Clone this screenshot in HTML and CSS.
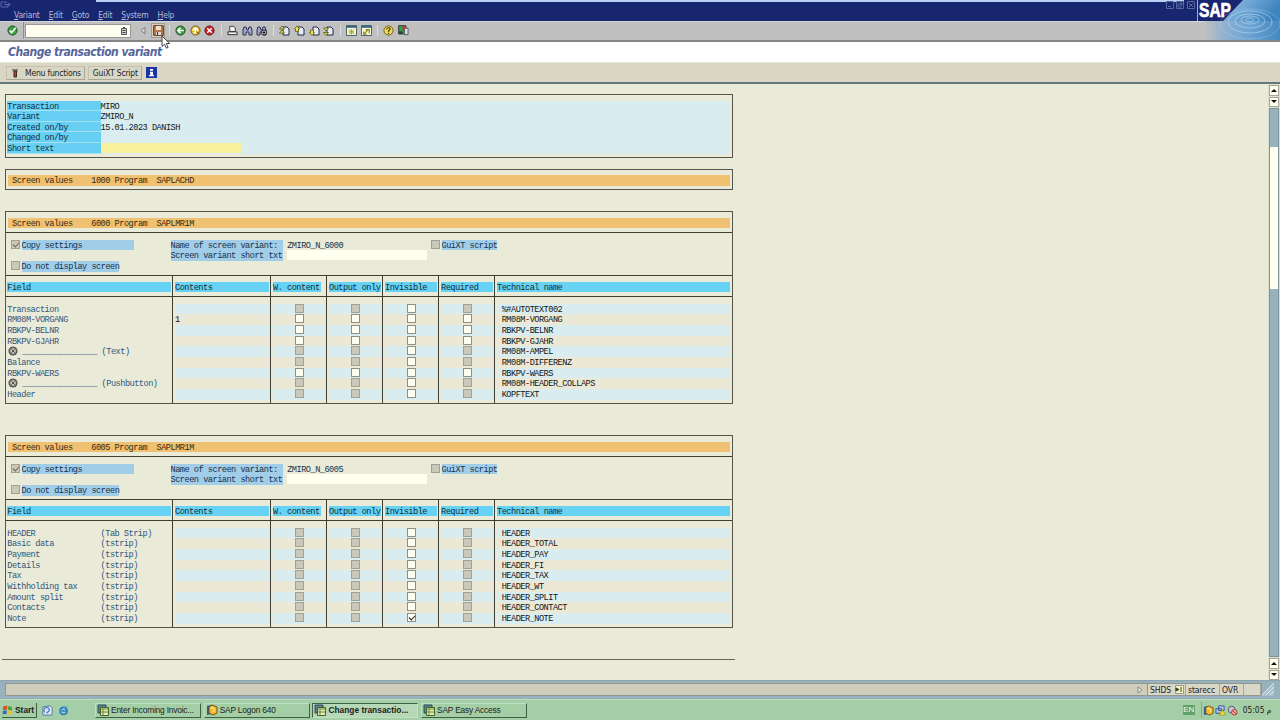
FILE: index.html
```
<!DOCTYPE html>
<html>
<head>
  <meta charset="utf-8">
  <title>Change transaction variant</title>
  <link rel="stylesheet" href="styles.css">
</head>
<body>

<!-- shared icons -->
<svg class="defs" width="0" height="0">
  <symbol id="page" viewBox="0 0 11 11"><path d="M4 2h4l2 2v6H4z" fill="#e8ecf8" stroke="#222a44"/></symbol>
  <symbol id="bino" viewBox="0 0 11 11"><path d="M1 10V5l1-3h2l1 3h1l1-3h2l1 3v5H7V7H4v3z" fill="#a5a8ce" stroke="#2c2e50"/></symbol>
  <symbol id="sapwin" viewBox="0 0 12 12"><path d="M1 1h8v8H1z" fill="#5b7d9a" stroke="#2d4c5c"/><path d="M3.500 3.500h8v8h-8z" fill="#e7e9c0" stroke="#44661f"/><path d="M4 5h7M4 8h7M6 5v6" stroke="#668b2d"/></symbol>
  <symbol id="logon" viewBox="0 0 12 12"><path d="M1 2l4-1v9L1 11z" fill="#345b8c"/><path d="M3 3l3-2 5 2v6l-4 2-4-2z" fill="#f5b92c" stroke="#725118"/><path d="M4 4h4v4" fill="none" stroke="#fff0a0"/></symbol>
  <symbol id="cross" viewBox="0 0 10 10"><circle cx="5" cy="5" r="4.600" fill="#5f5f59"/><circle cx="5" cy="5" r="2.800" fill="#c8c8bb"/><path d="M3.300 3.300l3.400 3.400M6.700 3.300L3.300 6.700" stroke="#4d4d48"/></symbol>
</svg>

<div class="menubar">
  <svg class="sysmenu" viewBox="0 0 11 8"><path d="M1 2h6M1 7h7V5M1 2v5M4 4.500h6M8 2.500l2 2-2 2" fill="none" stroke="#596ba6"/></svg>
  <div class="menus">
    <span><u>V</u>ariant</span><span><u>E</u>dit</span><span><u>G</u>oto</span><span><u>E</u>dit</span><span><u>S</u>ystem</span><span><u>H</u>elp</span>
  </div>
  <svg class="winbtns" viewBox="0 0 30 9"><g fill="none" stroke="#56689f"><path d="M.5.500h7v7h-7zM2 5.500h3M10.500.500h7v7h-7zM12 3h3v3h-3zM14 2h2v2M21.500.500h7v7h-7zM23 2l4 4M27 2l-4 4"/></g></svg>
</div>

<div class="toolbar">
  <div class="okzone"><svg viewBox="0 0 12 12"><circle cx="6" cy="6" r="5" fill="#3ca03c" stroke="#174f1a"/><path d="M3 6l2 2.500L9.500 3" fill="none" stroke="#fff" stroke-width="1.600"/></svg></div>
  <div class="command"><svg viewBox="0 0 6 8"><path d="M.5 1.500h5v6h-5z" fill="#d5d5ca" stroke="#555"/><path d="M1.500 3.500h3M1.500 5.500h3M2 .5h2" stroke="#444"/></svg></div>
  <svg class="t-back" viewBox="0 0 6 9"><path d="M5 1v7L1 4.500z" fill="#d4d4d4" stroke="#808080"/></svg>
  <div class="save"><svg viewBox="0 0 11 11"><path d="M.7.700h9.600v9.600H.7z" fill="#b97a4b" stroke="#5a3827"/><path d="M3 1h5v4H3z" fill="#efe1cb"/><path d="M3 7h5v3H3z" fill="#dadada"/><path d="M4 7h1v3H4z" fill="#333"/></svg></div>
  <i class="sep"></i>
  <svg class="ic" viewBox="0 0 12 12"><circle cx="6" cy="6" r="5" fill="#3d9b42" stroke="#134516"/><path d="M9.500 6H4M6 3L3 6l3 3" fill="none" stroke="#fff" stroke-width="1.700"/></svg>
  <svg class="ic" viewBox="0 0 12 12"><circle cx="6" cy="6" r="5" fill="#e6bf35" stroke="#6c5313"/><path d="M3 6l3-3 3 3M6 4v4.500H4" fill="none" stroke="#fff" stroke-width="1.500"/><path d="M7.500 7.500l2 2.500" stroke="#333"/></svg>
  <svg class="ic" viewBox="0 0 12 12"><circle cx="6" cy="6" r="5" fill="#c92228" stroke="#5d1014"/><path d="M3.500 3.500l5 5M8.500 3.500l-5 5" stroke="#fff" stroke-width="1.500"/></svg>
  <i class="sep"></i>
  <svg class="ic" viewBox="0 0 12 12"><path d="M3 1.500h4l2 1.500v4H3z" fill="#fff" stroke="#333"/><path d="M1 7.500h10v3H1z" fill="#f4f4f4" stroke="#222"/></svg>
  <svg class="ic" viewBox="0 0 11 11"><use href="#bino"/></svg>
  <svg class="ic" viewBox="0 0 11 11"><use href="#bino"/><circle cx="8" cy="7.500" r="2.500" fill="#fff" stroke="#111"/><path d="M6.500 7.500h3M8 6v3" stroke="#111"/></svg>
  <i class="sep"></i>
  <svg class="ic" viewBox="0 0 11 11"><use href="#page"/><path d="M.5 4l2.500-3L5.500 4zM.5 8L3 5l2.500 3z" fill="#f1e442" stroke="#4a4a12" stroke-width=".7"/></svg>
  <svg class="ic" viewBox="0 0 11 11"><use href="#page"/><path d="M.5 4l2.500-3 2.500 3h-1v2.500h-3V4z" fill="#f1e442" stroke="#4a4a12" stroke-width=".7"/></svg>
  <svg class="ic" viewBox="0 0 11 11"><use href="#page"/><path d="M.5 7.500l2.500 3 2.500-3h-1V5h-3v2.500z" fill="#f1e442" stroke="#4a4a12" stroke-width=".7"/></svg>
  <svg class="ic" viewBox="0 0 11 11"><use href="#page"/><path d="M.5 3l2.500 3 2.500-3zM.5 7.500l2.500 3 2.500-3z" fill="#f1e442" stroke="#4a4a12" stroke-width=".7"/></svg>
  <i class="sep"></i>
  <svg class="ic" viewBox="0 0 12 12"><path d="M.5.500h11v11H.5z" fill="#f7f7d6" stroke="#3a5b62"/><path d="M1 1h10v2H1z" fill="#2d6281"/><path d="M3 5l6 5M9 5l-6 5M6 4.500v6M3 7.500h6" stroke="#a9a52c"/></svg>
  <svg class="ic" viewBox="0 0 12 12"><path d="M.5.500h11v11H.5z" fill="#f7f7d6" stroke="#3a5b62"/><path d="M1 1h10v2H1z" fill="#2d6281"/><path d="M3 10l5-5M5 5h4v4M3 7v3h3" fill="none" stroke="#8e8b1a" stroke-width="1.300"/></svg>
  <i class="sep"></i>
  <svg class="ic" viewBox="0 0 12 12"><circle cx="6" cy="6" r="5" fill="#efd955" stroke="#685618"/><path d="M4 5q0-2 2-2t2 1.500L6 6.500v1M6 8.500v1.300" fill="none" stroke="#4e3c0c" stroke-width="1.300"/></svg>
  <svg class="ic" viewBox="0 0 12 12"><path d="M.7.700h8v9h-8z" fill="#2da04b" stroke="#333"/><path d="M5 1h3v5H5z" fill="#d5342f"/><path d="M7 3.500h4v7H7z" fill="#dcdcf0" stroke="#555"/><path d="M1 7h4v3H1z" fill="#304030"/></svg>
</div>

<svg class="brand" viewBox="0 0 83 40">
  <defs>
    <linearGradient id="water" x1="0" x2="1" y1="0" y2=".3"><stop offset="0" stop-color="#8fb4da"/><stop offset=".4" stop-color="#74a9d6"/><stop offset="1" stop-color="#3d83bd"/></linearGradient>
    <linearGradient id="shore" gradientUnits="userSpaceOnUse" x1="8" x2="83" y1="0" y2="0"><stop offset="0" stop-color="#c0c0c0"/><stop offset=".28" stop-color="#8db0d2"/><stop offset=".6" stop-color="#6aa3d2"/><stop offset="1" stop-color="#4588c0"/></linearGradient>
  </defs>
  <path d="M0 0h46L26 21H0z" fill="#18266f"/>
  <path d="M8 21h75v19H8z" fill="url(#shore)"/>
  <path d="M46 0h37v21H26z" fill="url(#water)"/>
  <g fill="none" stroke="#b9dcf4" stroke-opacity=".6">
    <ellipse cx="53" cy="20" rx="4" ry="2"/><ellipse cx="53" cy="20" rx="9" ry="4"/><ellipse cx="53" cy="21" rx="15" ry="7"/><ellipse cx="53" cy="22" rx="22" ry="11"/><ellipse cx="53" cy="24" rx="30" ry="15" stroke-opacity=".3"/>
  </g>
  <path d="M.5 0v21" stroke="#a6acc8"/>
  <text x="2" y="17" textLength="32" lengthAdjust="spacingAndGlyphs">SAP</text>
</svg>

<div class="titlebar"><h1>Change transaction variant</h1></div>

<div class="appbar">
  <div class="btn"><svg viewBox="0 0 8 10"><path d="M1 1l6 2M7 1L1 3" stroke="#777"/><path d="M3 3h2.500v6H3z" fill="#b5403a" stroke="#3f2422"/></svg>Menu functions</div>
  <div class="btn">GuiXT Script</div>
  <svg class="info" viewBox="0 0 11 11"><path d="M0 0h11v11H0z" fill="#1d35a4"/><path d="M4 2h3v1.700H4zM4 4.700h3V8h1v1.200H3V8h1.300V6H4z" fill="#fff"/></svg>
</div>

<div class="work">
  <div class="list">

    <div class="box head">
      <div class="line"><span class="key">Transaction</span><span class="val">MIRO</span></div>
      <div class="line"><span class="key">Variant</span><span class="val">ZMIRO_N</span></div>
      <div class="line"><span class="key">Created on/by</span><span class="val">15.01.2023 DANISH</span></div>
      <div class="line"><span class="key">Changed on/by</span><span class="val"></span></div>
      <div class="line"><span class="key">Short text</span><span class="val"><span class="entry"></span></span></div>
    </div>

    <div class="box s1000">
      <div class="bar"> Screen values    1000 Program  SAPLACHD</div>
    </div>

    <div class="box s6000">
      <div class="bar"> Screen values    6000 Program  SAPLMR1M</div>
      <div class="settings">
        <div class="left">
          <div class="opt wide"><i class="cb off tick"></i><span>Copy settings</span></div>
          <div class="opt"><i class="cb off"></i><span>Do not display screen</span></div>
        </div>
        <div class="mid">
          <div class="pair"><span>Name of screen variant:</span><b>ZMIRO_N_6000</b></div>
          <div class="pair"><span>Screen variant short txt</span><em></em></div>
        </div>
        <div class="opt"><i class="cb off"></i><span>GuiXT script</span></div>
      </div>
      <div class="row th"><div>Field</div><div>Contents</div><div>W. content</div><div>Output only</div><div>Invisible</div><div>Required</div><div>Technical name</div></div>
      <div class="rows">
        <div class="row"><div>Transaction</div><div></div><div><i class="cb off"></i></div><div><i class="cb off"></i></div><div><i class="cb"></i></div><div><i class="cb off"></i></div><div>%#AUTOTEXT002</div></div>
        <div class="row"><div>RM08M-VORGANG</div><div>1</div><div><i class="cb"></i></div><div><i class="cb"></i></div><div><i class="cb"></i></div><div><i class="cb"></i></div><div>RM08M-VORGANG</div></div>
        <div class="row"><div>RBKPV-BELNR</div><div></div><div><i class="cb"></i></div><div><i class="cb"></i></div><div><i class="cb"></i></div><div><i class="cb"></i></div><div>RBKPV-BELNR</div></div>
        <div class="row"><div>RBKPV-GJAHR</div><div></div><div><i class="cb"></i></div><div><i class="cb"></i></div><div><i class="cb"></i></div><div><i class="cb"></i></div><div>RBKPV-GJAHR</div></div>
        <div class="row"><div><svg><use href="#cross"/></svg>________________ (Text)</div><div></div><div><i class="cb off"></i></div><div><i class="cb off"></i></div><div><i class="cb"></i></div><div><i class="cb off"></i></div><div>RM08M-AMPEL</div></div>
        <div class="row"><div>Balance</div><div></div><div><i class="cb off"></i></div><div><i class="cb off"></i></div><div><i class="cb"></i></div><div><i class="cb off"></i></div><div>RM08M-DIFFERENZ</div></div>
        <div class="row"><div>RBKPV-WAERS</div><div></div><div><i class="cb"></i></div><div><i class="cb"></i></div><div><i class="cb"></i></div><div><i class="cb"></i></div><div>RBKPV-WAERS</div></div>
        <div class="row"><div><svg><use href="#cross"/></svg>________________ (Pushbutton)</div><div></div><div><i class="cb off"></i></div><div><i class="cb off"></i></div><div><i class="cb"></i></div><div><i class="cb off"></i></div><div>RM08M-HEADER_COLLAPS</div></div>
        <div class="row"><div>Header</div><div></div><div><i class="cb off"></i></div><div><i class="cb off"></i></div><div><i class="cb"></i></div><div><i class="cb off"></i></div><div>KOPFTEXT</div></div>
      </div>
    </div>

    <div class="box s6005">
      <div class="bar"> Screen values    6005 Program  SAPLMR1M</div>
      <div class="settings">
        <div class="left">
          <div class="opt wide"><i class="cb off tick"></i><span>Copy settings</span></div>
          <div class="opt"><i class="cb off"></i><span>Do not display screen</span></div>
        </div>
        <div class="mid">
          <div class="pair"><span>Name of screen variant:</span><b>ZMIRO_N_6005</b></div>
          <div class="pair"><span>Screen variant short txt</span><em></em></div>
        </div>
        <div class="opt"><i class="cb off"></i><span>GuiXT script</span></div>
      </div>
      <div class="row th"><div>Field</div><div>Contents</div><div>W. content</div><div>Output only</div><div>Invisible</div><div>Required</div><div>Technical name</div></div>
      <div class="rows">
        <div class="row"><div>HEADER              (Tab Strip)</div><div></div><div><i class="cb off"></i></div><div><i class="cb off"></i></div><div><i class="cb"></i></div><div><i class="cb off"></i></div><div>HEADER</div></div>
        <div class="row"><div>Basic data          (tstrip)</div><div></div><div><i class="cb off"></i></div><div><i class="cb off"></i></div><div><i class="cb"></i></div><div><i class="cb off"></i></div><div>HEADER_TOTAL</div></div>
        <div class="row"><div>Payment             (tstrip)</div><div></div><div><i class="cb off"></i></div><div><i class="cb off"></i></div><div><i class="cb"></i></div><div><i class="cb off"></i></div><div>HEADER_PAY</div></div>
        <div class="row"><div>Details             (tstrip)</div><div></div><div><i class="cb off"></i></div><div><i class="cb off"></i></div><div><i class="cb"></i></div><div><i class="cb off"></i></div><div>HEADER_FI</div></div>
        <div class="row"><div>Tax                 (tstrip)</div><div></div><div><i class="cb off"></i></div><div><i class="cb off"></i></div><div><i class="cb"></i></div><div><i class="cb off"></i></div><div>HEADER_TAX</div></div>
        <div class="row"><div>Withholding tax     (tstrip)</div><div></div><div><i class="cb off"></i></div><div><i class="cb off"></i></div><div><i class="cb"></i></div><div><i class="cb off"></i></div><div>HEADER_WT</div></div>
        <div class="row"><div>Amount split        (tstrip)</div><div></div><div><i class="cb off"></i></div><div><i class="cb off"></i></div><div><i class="cb"></i></div><div><i class="cb off"></i></div><div>HEADER_SPLIT</div></div>
        <div class="row"><div>Contacts            (tstrip)</div><div></div><div><i class="cb off"></i></div><div><i class="cb off"></i></div><div><i class="cb"></i></div><div><i class="cb off"></i></div><div>HEADER_CONTACT</div></div>
        <div class="row"><div>Note                (tstrip)</div><div></div><div><i class="cb off"></i></div><div><i class="cb off"></i></div><div><i class="cb tick"></i></div><div><i class="cb off"></i></div><div>HEADER_NOTE</div></div>
      </div>
    </div>

    <div class="rule"></div>
  </div>

  <div class="scroll">
    <div class="arrow up"></div>
    <div class="arrow down"></div>
    <div class="track"><div class="thumb"></div></div>
    <div class="arrow up"></div>
    <div class="arrow down"></div>
  </div>
</div>

<div class="status">
  <div class="message"><svg viewBox="0 0 6 8"><path d="M1 1v6l4-3z" fill="#eee" stroke="#888"/></svg></div>
  <div class="cells">
    <span class="c1">SHDS <svg viewBox="0 0 9 9"><path d="M.5.500h8v8h-8z" fill="#f2f1c8" stroke="#99988a"/><path d="M1 3l3 1.500L1 6zM6 2v5" fill="#333" stroke="#444b16"/></svg></span>
    <span class="c2">starecc</span><span class="c3">OVR</span><span class="c4"></span>
  </div>
  <svg class="grip" viewBox="0 0 14 14"><path d="M0 14L13 1v13z" fill="#a9c0cb"/><path d="M1 13L13 1M5 13l8-8M9 13l4-4" stroke="#e2ecef"/></svg>
</div>

<div class="taskbar">
  <div class="start"><svg viewBox="0 0 11 11"><path d="M1 2.500l4-1v4l-4 .7z" fill="#d9542b"/><path d="M5.700 2l4.300 1v3.500l-4.300-.7z" fill="#55a33c"/><path d="M.7 7l4-.7v3.500l-4 .5z" fill="#3a66c2"/><path d="M5.400 6.500l4.300.7v3.300l-4.300-.5z" fill="#efc02e"/></svg>Start</div>
  <svg class="quick" viewBox="0 0 12 12"><path d="M1 2l8-1 2 2v8H1z" fill="#dfe9f5" stroke="#5373a6"/><path d="M3 8a3 3 0 1 1 5-2L5 9" fill="none" stroke="#3a78c4" stroke-width="1.300"/></svg>
  <svg class="quick" viewBox="0 0 12 12"><circle cx="6" cy="6.500" r="3.800" fill="none" stroke="#2579c9" stroke-width="2"/><path d="M3 6.500h6" stroke="#2579c9" stroke-width="1.500"/><path d="M1 10Q0 8 5 4t6-2" fill="none" stroke="#5db0e6"/></svg>
  <div class="task first"><svg><use href="#sapwin"/></svg>Enter Incoming Invoic...</div>
  <div class="task"><svg><use href="#logon"/></svg>SAP Logon 640</div>
  <div class="task active"><svg><use href="#sapwin"/></svg>Change transactio...</div>
  <div class="task"><svg><use href="#sapwin"/></svg>SAP Easy Access</div>
  <div class="lang">EN</div>
  <div class="tray">
    <svg><use href="#logon"/></svg>
    <svg viewBox="0 0 12 12"><path d="M4 1h6v5H4zM1 4h6v5H1z" fill="#aac5ef" stroke="#315592"/><path d="M8 5l3.500 6h-7z" fill="#f4df25" stroke="#8a7a12" stroke-width=".6"/></svg>
    <svg viewBox="0 0 12 12"><circle cx="5" cy="5" r="3.700" fill="#c5c5cf" stroke="#575763"/><circle cx="8" cy="8" r="3" fill="#e6b3b3" stroke="#b92929"/><path d="M6 6l4 4" stroke="#b92929"/></svg>
    <span class="clock">05:05 م</span>
  </div>
</div>

<svg class="cursor" viewBox="0 0 10 15"><path d="M1 1v10.500l2.500-2.300 1.800 4 1.800-.8-1.800-3.900h3.400z" fill="#fff" stroke="#333" stroke-width=".9"/></svg>

</body>
</html>
```

FILE: styles.css
```
* {box-sizing:border-box;}
body {margin:0;width:1280px;height:720px;overflow:hidden;display:flex;flex-direction:column;position:relative;background:#e9ead7;font-family:"DejaVu Sans Condensed","DejaVu Sans",sans-serif;font-stretch:condensed;font-size:8.5px;color:#222;}
svg {display:block;flex:none;}
.defs {position:absolute;}

/* menu bar */
.menubar {height:21px;flex:none;background:#18266f;position:relative;color:#b4bbd6;}
.menubar:before {content:"";position:absolute;left:96px;top:0;width:1088px;height:2px;background:#b9d2f5;}
.sysmenu {width:11px;height:8px;}
.menus {display:flex;gap:9px;padding:1px 0 0 14px;line-height:13px;letter-spacing:-.2px;}
.menus u {text-underline-offset:1px;}
.winbtns {position:absolute;left:1166px;top:1px;width:30px;height:9px;}

/* system toolbar */
.toolbar {height:21px;flex:none;background:#c0c0c0;border-top:1px solid #d6d6d6;border-bottom:2px solid #858585;padding-bottom:1px;display:flex;align-items:center;}
.okzone {width:24px;height:17px;padding:3px 0 0 7px;border-right:1px solid #8d8d8d;}
.okzone svg {width:11px;height:11px;}
.command {width:106px;height:14px;margin-left:1px;background:#fffff0;border:1px solid #999;display:flex;align-items:center;justify-content:flex-end;padding-right:3px;}
.command svg {width:6px;height:8px;}
.t-back {width:6px;height:9px;margin:0 5px 0 9px;}
.save {width:14px;height:15px;background:#d5cdbf;border:1px solid #a49d90;display:flex;align-items:center;justify-content:center;}
.save svg {width:11px;height:11px;}
.ic {width:11px;height:11px;margin-right:3.7px;}
.sep {width:1px;height:11px;background:#dedede;margin:0 5px 0 2px;}
.toolbar .save + .sep {margin:0 5px 0 4px;}

.brand {position:absolute;left:1197px;top:0;width:83px;height:40px;}
.brand text {font:bold 19.5px "Liberation Sans",sans-serif;fill:#fff;stroke:#fff;stroke-width:.7;}

.titlebar {height:20px;flex:none;background:#fff;}
.titlebar h1 {margin:0;padding-left:8px;font-size:12px;letter-spacing:-.48px;line-height:20px;font-style:italic;color:#55659b;}

.appbar {height:22px;flex:none;background:#d9d7c4;border-top:1px solid #e8e8da;border-bottom:2px solid #66777b;display:flex;align-items:center;gap:3px;padding-left:6px;}
.btn {height:14px;border:1px solid #c5c2b0;border-right-color:#aaa898;border-bottom-color:#aaa898;display:flex;align-items:center;padding:0 3px 0 4px;letter-spacing:-.2px;}
.btn svg {width:8px;height:10px;margin-right:6px;}
.info {width:11px;height:11px;margin-left:1px;}

/* list output: 4.667 x 10.667 character grid */
.work {height:596px;flex:none;display:flex;justify-content:space-between;}
.list {width:736px;padding:9.5px 0 0 5px;font-family:"Liberation Mono",monospace;font-size:8.6px;letter-spacing:-.494px;line-height:12px;white-space:nowrap;color:#151515;}
.box {width:728px;border:1px solid #55554b;margin-bottom:11px;}
.head {height:64px;padding:6px 2px 6px 1.300px;}
.line {display:flex;height:10.667px;}
.line span {display:block;}
.line .key {width:93.3px;background:#67cff3;border-bottom:1px solid #a9dfef;color:#10303c;}
.line .val {flex:1;background:#d9edf1;}
.line .entry {width:140px;height:10px;background:#f9f09e;}
.bar {height:10.667px;margin:5.500px 2px 0;background:#f0c170;white-space:pre;text-indent:-.7px;color:#3b2a10;}
.s1000 {height:21px;margin-bottom:21.500px;}
.s6000,.s6005 {height:193px;margin-bottom:31px;}
.settings {height:43px;margin-top:4px;border-top:1px solid #3e3d34;padding:6.500px 0 0 4.500px;display:flex;}
.left {width:160px;}
.opt {display:flex;height:10.667px;color:#16324c;}
.opt .cb {margin-right:2px;}
.opt span {background:#a2cde8;}
.opt.wide span {width:112px;}
.opt + .opt {margin-top:10.667px;}
.mid {width:260px;}
.pair {display:flex;height:10.667px;color:#16324c;}
.pair span {width:112px;margin-right:4.667px;background:#a2cde8;}
.pair b {font-weight:normal;}
.pair em {width:140px;height:10px;background:#fffff0;}

.row {display:grid;grid-template-columns:166px 98px 56px 56px 56px 56px 1fr;grid-template-rows:100%;height:10.667px;white-space:pre;}
.row > div {border-left:1px solid #3e3d34;padding:0 1px 0 2px;background-clip:content-box;}
.row > div:first-child {border-left:0;padding-left:1.300px;color:#32577e;display:flex;}
.row > div:last-child {padding-right:2px;text-indent:4.667px;}
.row svg {width:10px;height:10px;margin:0 4.500px 0 .5px;}
.th {height:22px;border-top:1px solid #3e3d34;border-bottom:1px solid #3e3d34;}
.th > div, .th > div:first-child {padding-top:5.500px;padding-bottom:4px;background-color:#67d2f4;color:#10303c;}
.th > div:last-child {text-indent:0;}
.th > div:nth-child(3) {padding-right:5px;}
.rows {padding-top:6.500px;height:106px;background:linear-gradient(#3e3d34,#3e3d34) 166px 0/1px 100% no-repeat,linear-gradient(#3e3d34,#3e3d34) 264px 0/1px 100% no-repeat,linear-gradient(#3e3d34,#3e3d34) 320px 0/1px 100% no-repeat,linear-gradient(#3e3d34,#3e3d34) 376px 0/1px 100% no-repeat,linear-gradient(#3e3d34,#3e3d34) 432px 0/1px 100% no-repeat,linear-gradient(#3e3d34,#3e3d34) 488px 0/1px 100% no-repeat;}
.rows .row:nth-child(odd) > div:not(:first-child) {background-color:#d9edf1;}
.rows .row:nth-child(even) > div:not(:first-child) {background-color:#ebe9d6;}

.cb {display:block;flex:none;width:9px;height:9px;border:1px solid #8f8f84;background:#fffff2;}
.cb.off {background:#c9c8b9;border-color:#a1a094;}
.row .cb {margin-left:22px;}
.tick:after {content:"";display:block;width:5px;height:3px;margin:1px;border-left:1.500px solid #111;border-bottom:1.500px solid #111;transform:rotate(-48deg);}
.off.tick:after {border-color:#66665c;}
.rule {width:733px;height:1px;margin-left:-3px;background:#66665a;}

/* scrollbar */
.scroll {width:12px;padding:1px 0 0 1px;background:#dfdfcd;display:flex;flex-direction:column;gap:1px;}
.arrow {width:10px;height:10.500px;flex:none;border:1px solid #a4a497;background:#fffff0;display:flex;align-items:center;justify-content:center;}
.arrow:before {content:"";border:3px solid transparent;}
.up:before {border-bottom-color:#111;border-top:0;}
.down:before {border-top-color:#111;border-bottom:0;}
.track {flex:1;width:10px;background:#97b2bd;border:1px solid #7d949c;padding-top:38px;}
.thumb {height:142px;background:#fffff0;}

/* status line */
.status {height:19px;flex:none;background:#97b2bd;border-top:1px solid #8da5ab;display:flex;padding:2px 5px 3px;position:relative;}
.message {width:1142px;background:#cfccbc;border:1px solid #8f988f;border-right:0;padding:2px 4px 0 0;}
.message svg {width:6px;height:8px;margin-left:auto;}
.cells {width:115px;display:flex;background:#d9d7c7;border:1px solid #8f988f;line-height:12px;letter-spacing:-.1px;}
.cells span {border-right:1px solid #aaa898;padding-left:2px;}
.c1 {width:38px;display:flex;}
.c1 svg {width:9px;height:9px;margin:1px 0 0 4px;}
.c2 {width:34px;}
.c3 {width:24px;}
.cells .c4 {flex:1;}
.grip {position:absolute;right:5px;bottom:3px;width:14px;height:14px;}

/* windows taskbar */
.taskbar {height:21px;flex:none;background:#a4cfa6;border-top:1px solid #b9dfba;display:flex;align-items:center;font-family:"Liberation Sans",sans-serif;font-size:8.4px;white-space:nowrap;}
.start {width:35px;height:15px;margin-left:2px;font-weight:bold;display:flex;align-items:center;border-right:1px solid #3f6044;border-bottom:1px solid #3f6044;}
.start svg {width:11px;height:11px;margin-right:2px;}
.quick {width:11px;height:11px;margin-left:5px;}
.task {width:106px;height:15px;margin-right:2.700px;padding-left:1px;display:flex;align-items:center;letter-spacing:-.2px;border:1px solid #bfe1c0;border-right-color:#3f6044;border-bottom-color:#3f6044;}
.task.first {margin-left:26px;}
.task svg {width:12px;height:12px;margin-right:2px;}
.task.active {font-weight:bold;letter-spacing:0;background:#b5d9b7;border-color:#3f6044 #bfe1c0 #bfe1c0 #3f6044;}
.lang {margin-left:653px;width:12px;height:10px;background:#62a169;color:#f3fbf3;text-align:center;line-height:10px;font-size:8px;}
.tray {flex:1;display:flex;align-items:center;height:16px;margin-left:6px;padding-left:1px;border-left:1px solid #82ad86;}
.tray svg {width:11px;height:11px;margin-right:1px;}
.clock {margin-left:4px;font-family:"DejaVu Sans Condensed","DejaVu Sans",sans-serif;letter-spacing:-.2px;}

.cursor {position:absolute;left:161px;top:35px;width:10px;height:15px;}
```
